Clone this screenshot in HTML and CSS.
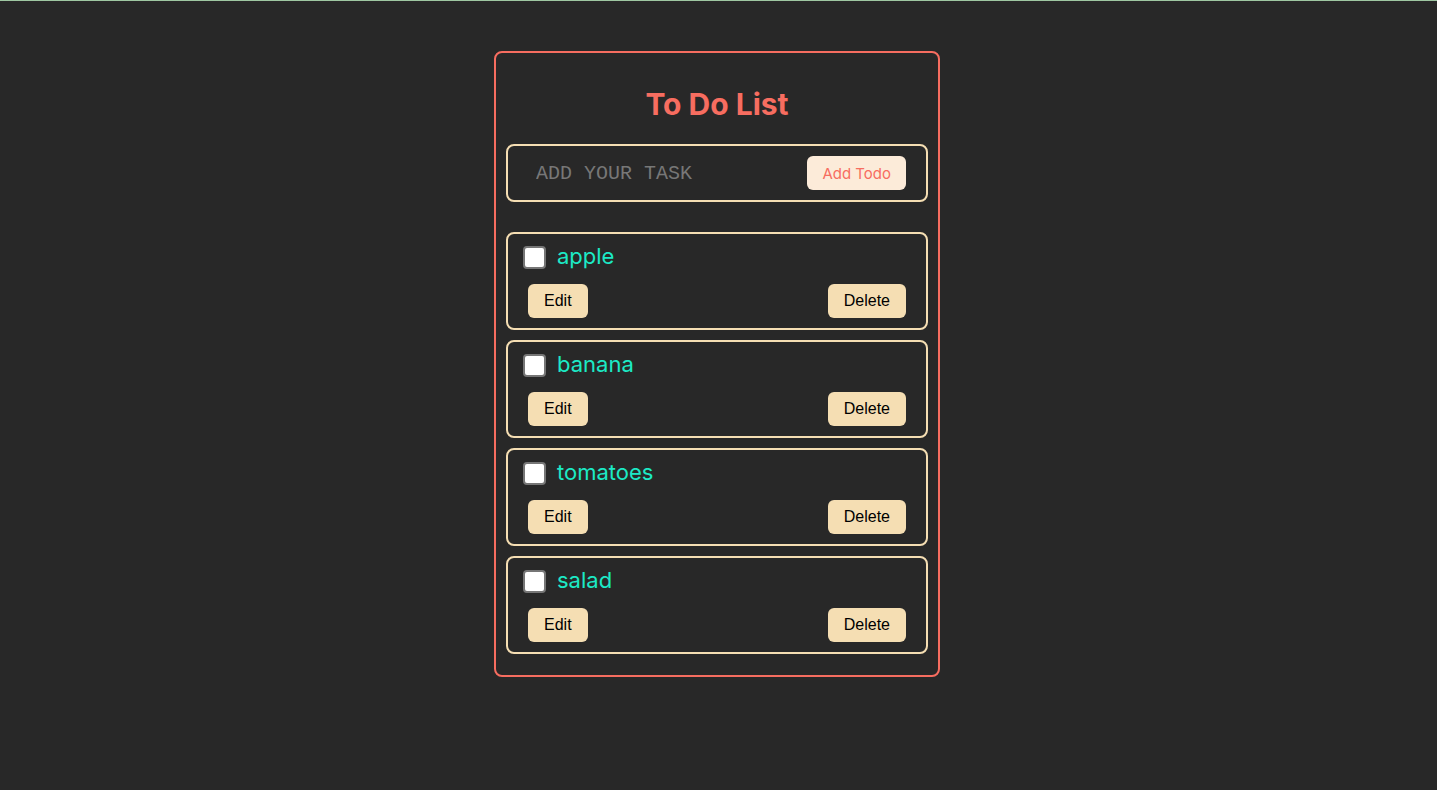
FILE: index.html
```html
<!DOCTYPE html>
<html lang="en">
<head>
<meta charset="utf-8">
<title>To Do List</title>
<link rel="stylesheet" href="styles.css">
</head>
<body>
<main class="page">
  <section class="card">
    <h1 class="title">To Do List</h1>
    <form class="add-form">
      <input class="add-input" type="text" placeholder="ADD YOUR TASK">
      <button class="add-btn" type="button">Add Todo</button>
    </form>
    <ul class="list">
      <li class="item">
        <label class="item-row"><input class="check" type="checkbox"><span class="item-text">apple</span></label>
        <div class="actions"><button class="btn" type="button">Edit</button><button class="btn" type="button">Delete</button></div>
      </li>
      <li class="item">
        <label class="item-row"><input class="check" type="checkbox"><span class="item-text">banana</span></label>
        <div class="actions"><button class="btn" type="button">Edit</button><button class="btn" type="button">Delete</button></div>
      </li>
      <li class="item">
        <label class="item-row"><input class="check" type="checkbox"><span class="item-text">tomatoes</span></label>
        <div class="actions"><button class="btn" type="button">Edit</button><button class="btn" type="button">Delete</button></div>
      </li>
      <li class="item">
        <label class="item-row"><input class="check" type="checkbox"><span class="item-text">salad</span></label>
        <div class="actions"><button class="btn" type="button">Edit</button><button class="btn" type="button">Delete</button></div>
      </li>
    </ul>
  </section>
</main>
</body>
</html>
```

FILE: styles.css
```css
html, body {
  margin: 0;
  padding: 0;
}
body {
  background: #282828;
  border-top: 1px solid #9fc7a2;
  min-height: 789px;
  font-family: Inter, "Liberation Sans", sans-serif;
}
.page {
  display: flex;
  justify-content: center;
  padding-top: 50px;
  padding-right: 3px;
}
.card {
  width: 422px;
  padding: 10px;
  border: 2px solid #f76d60;
  border-radius: 8px;
  box-sizing: content-box;
}
.title {
  margin: 21px 0 20px;
  line-height: 40px;
  font-size: 30px;
  font-weight: 700;
  color: #f76d60;
  text-align: center;
}
.add-form {
  display: flex;
  align-items: center;
  margin: 0;
  padding: 10px 20px 10px 28px;
  border: 2px solid #f5deb3;
  border-radius: 8px;
}
.add-input {
  flex: 1;
  min-width: 0;
  background: transparent;
  border: none;
  outline: none;
  padding: 0;
  font-family: "Liberation Mono", monospace;
  font-size: 20px;
  color: #ddd;
}
.add-input::placeholder {
  color: #777;
}
.add-btn {
  height: 34px;
  padding: 0 15px;
  border: none;
  border-radius: 6px;
  background: #fcebd9;
  color: #f76d60;
  font-family: Inter, "Liberation Sans", sans-serif;
  font-size: 15px;
}
.list {
  list-style: none;
  margin: 30px 0 11px;
  padding: 0;
  display: flex;
  flex-direction: column;
  gap: 10px;
}
.item {
  border: 2px solid #f5deb3;
  border-radius: 8px;
  padding: 12px 20px 10px 15px;
}
.item-row {
  display: flex;
  align-items: center;
  gap: 11px;
  height: 23px;
}
.check {
  appearance: none;
  -webkit-appearance: none;
  margin: 0;
  width: 23px;
  height: 23px;
  box-sizing: border-box;
  background: #fff;
  border: 2px solid #767676;
  border-radius: 4px;
}
.item-text {
  font-family: Inter, "Liberation Sans", sans-serif;
  font-size: 22px;
  line-height: 23px;
  color: #1ceac6;
  position: relative;
  top: -1px;
}
.actions {
  display: flex;
  justify-content: space-between;
  margin-top: 15px;
  padding-left: 5px;
}
.btn {
  height: 34px;
  padding: 0 16px;
  border: none;
  border-radius: 6px;
  background: #f5deb3;
  color: #000;
  font-family: "Liberation Sans", Arial, sans-serif;
  font-size: 16px;
}
```
